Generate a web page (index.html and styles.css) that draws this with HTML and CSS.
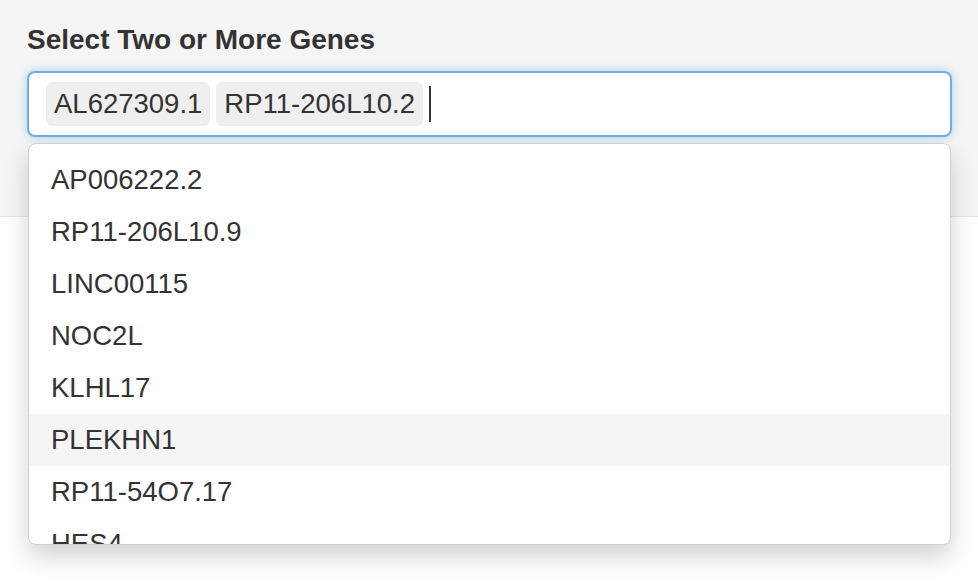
FILE: index.html
```html
<!DOCTYPE html>
<html>
<head>
<meta charset="utf-8">
<link rel="stylesheet" href="styles.css">
</head>
<body>
<div class="well">
  <div class="form-group">
    <label class="label">Select Two or More Genes</label>
    <div class="control">
      <div class="input">
        <span class="chip">AL627309.1</span>
        <span class="chip">RP11-206L10.2</span>
        <span class="caret"></span>
      </div>
      <div class="dropdown">
        <div class="option">AP006222.2</div>
        <div class="option">RP11-206L10.9</div>
        <div class="option">LINC00115</div>
        <div class="option">NOC2L</div>
        <div class="option">KLHL17</div>
        <div class="option active">PLEKHN1</div>
        <div class="option">RP11-54O7.17</div>
        <div class="option">HES4</div>
      </div>
    </div>
  </div>
</div>
</body>
</html>
```

FILE: styles.css
```css
html, body {
  margin: 0;
  padding: 0;
  background: #ffffff;
}
body {
  width: 978px;
  height: 588px;
  overflow: hidden;
  font-family: "Liberation Sans", Arial, Helvetica, sans-serif;
  color: #333333;
}
.well {
  height: 216px;
  background: #f5f5f5;
  border-bottom: 1px solid #e3e3e3;
  box-sizing: content-box;
  padding: 24px 26px 0 27px;
  box-sizing: border-box;
  height: 217px;
}
.label {
  display: block;
  font-size: 28px;
  font-weight: bold;
  line-height: 32px;
  margin: 0 0 15px 0;
}
.control {
  position: relative;
}
.input {
  display: flex;
  align-items: center;
  gap: 6px;
  height: 66px;
  box-sizing: border-box;
  padding: 9px 17px;
  background: #ffffff;
  border: 2px solid #72ade6;
  border-radius: 8px;
  box-shadow: 0 0 10px rgba(102, 175, 233, 0.55);
}
.chip {
  display: block;
  height: 44px;
  line-height: 44px;
  padding: 0 8px;
  background: #efefef;
  border-radius: 6px;
  font-size: 27.5px;
  color: #333333;
}
.caret {
  display: block;
  width: 2px;
  height: 36px;
  background: #333333;
}
.dropdown {
  position: absolute;
  top: 72px;
  left: 1px;
  right: 1px;
  height: 400px;
  overflow: hidden;
  background: #ffffff;
  border: 1px solid #d2d2d2;
  border-radius: 8px;
  box-shadow: 0 12px 24px rgba(0, 0, 0, 0.175);
  padding-top: 10px;
  box-sizing: content-box;
  height: 390px;
}
.option {
  height: 52px;
  line-height: 52px;
  padding-left: 22px;
  font-size: 27.5px;
  color: #333333;
}
.option.active {
  background: #f5f5f5;
}
```
